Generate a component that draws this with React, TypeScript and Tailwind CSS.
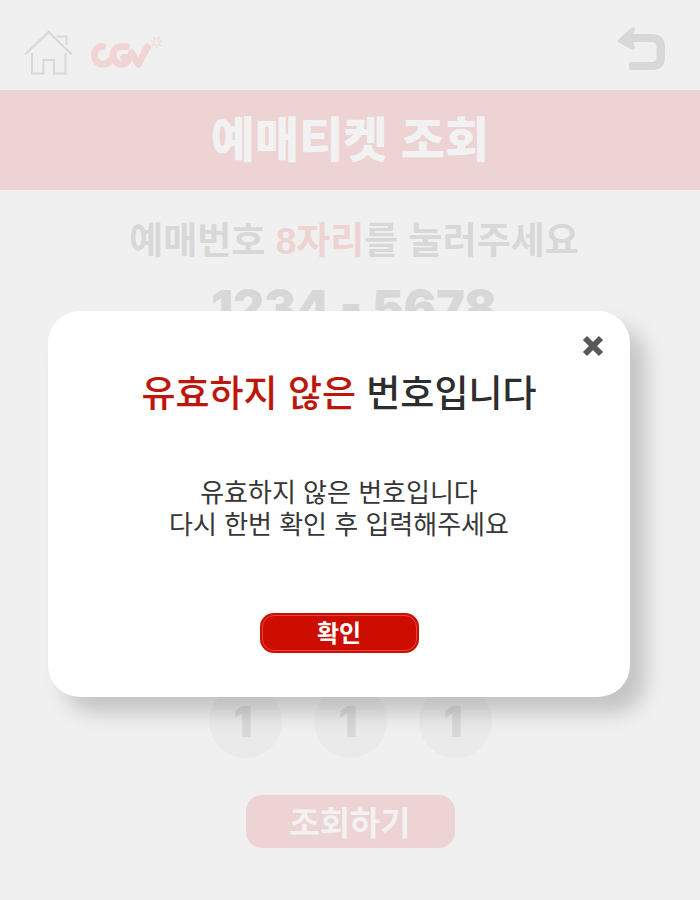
import React from "react";

function HomeIcon() {
  return (
    <svg viewBox="0 0 50 46" className="h-[46px] w-[50px]" fill="none" stroke="#d8d8d8" strokeWidth="2" aria-hidden="true">
      <path d="M1 25.500 24.500 3 48 25.500" />
      <path d="M33 7.500h9.500v8.500" />
      <path d="M8 24v20.500h11.500V31h10.500v13.500h11.500V24" />
    </svg>
  );
}

function CgvLogo() {
  return (
    <svg viewBox="0 0 72 34" className="h-[34px] w-[72px]" fill="none" strokeLinecap="round" strokeLinejoin="round" aria-label="CGV" role="img">
      <g stroke="#f1d5d5" strokeWidth="7">
        <path d="M12.500 11.500c-5.500 0-8 4-8 8.500 0 5.300 3.500 9.300 8.500 9.300 3 0 5.500-1.500 7.500-4" />
        <path d="M36.500 11.500H32c-6 0-9 4-9 8.500 0 5.500 4 9.300 8.700 9.300 3.500 0 6.300-2 6.800-6.800h-5" />
        <path d="M41.500 18 48.600 29.300 57.300 12" />
      </g>
      <g stroke="#f2dcd3" strokeWidth="1.800">
        <path d="M63.800 2.500 65 4.800M68.800 2.500 67.700 4.800M61.500 6.200l2.200.600M71.200 6.200l-2.200.600M62.300 10.500l2-1.500M70.500 10.500l-2-1.500M66.400 10.300v2" />
      </g>
    </svg>
  );
}

function BackIcon() {
  return (
    <svg viewBox="0 0 48 44" className="h-11 w-12" aria-hidden="true">
      <path
        d="M1.500 12.500 14 1q3-2 4 1-1.500 3-1 5h17q14 0 14 13v10q0 13-13 13H14q-2 0-2-2v-4q0-2 2-2h21q4.500 0 4.500-4V20q0-5-5-5H17q-.500 3 1 5-.500 4-4 2L1.500 15.500q-2-1.500 0-3Z"
        fill="#d8d8d8"
      />
    </svg>
  );
}

function KeypadButton({ digit }: { digit: number }) {
  return (
    <button
      type="button"
      className="size-[73px] rounded-full bg-[#eaeaea] pr-1 font-['Inter',sans-serif] text-[42px] leading-none font-black text-[#d8d8d8]"
    >
      {digit}
    </button>
  );
}

function InvalidNumberDialog() {
  return (
    <section
      role="dialog"
      aria-modal="true"
      aria-labelledby="dialog-title"
      className="absolute top-[311px] right-[70px] left-12 flex flex-col items-center rounded-[32px] bg-white px-6 pt-[58px] pb-11 text-center shadow-[16px_16px_20px_rgba(0,0,0,0.18)]"
    >
      <button type="button" aria-label="닫기" className="absolute top-6 right-[26px]">
        <svg viewBox="0 0 22 22" className="size-[22px]" stroke="#585858" strokeWidth="6" aria-hidden="true">
          <path d="M3 3l16 16M19 3 3 19" />
        </svg>
      </button>
      <h2 id="dialog-title" className="text-[37px] leading-[52px] font-medium text-[#2d2d2d]">
        <span className="text-[#bd160c]">유효하지 않은</span> 번호입니다
      </h2>
      <p className="mt-14 text-[26px] leading-8 text-[#363636]">
        유효하지 않은 번호입니다
        <br />
        다시 한번 확인 후 입력해주세요
      </p>
      <button
        type="button"
        className="mt-[72px] h-10 w-[159px] rounded-[14px] bg-[#cd0d00] p-[2px] text-2xl leading-none font-bold text-white"
      >
        <span className="flex h-full items-center justify-center rounded-xl border border-[#e0483f] pt-0.5">확인</span>
      </button>
    </section>
  );
}

export default function App() {
  return (
    <div className="relative min-h-screen bg-[#f0f0f0] font-['Liberation_Sans','Noto_Sans_CJK_KR',sans-serif]">
      <header className="flex h-[90px] items-start pr-[35px] pl-6">
        <a href="#home" aria-label="홈" className="mt-[29px]">
          <HomeIcon />
        </a>
        <div className="mt-[35px] ml-4">
          <CgvLogo />
        </div>
        <button type="button" aria-label="뒤로" className="mt-[27px] ml-auto">
          <BackIcon />
        </button>
      </header>

      <h1 className="flex h-[100px] items-center justify-center bg-[#edd3d3] pt-0.5 text-[48px] leading-none font-black text-[#f2f2f2]">
        예매티켓 조회
      </h1>

      <main className="flex flex-col items-center">
        <p className="mt-[26px] pl-2 text-[37px] leading-[52px] font-bold text-[#d8d8d8]">
          예매번호 <span className="text-[#efd3d2]">8자리</span>를 눌러주세요
        </p>
        <p className="mt-3.5 pl-2 font-['Inter',sans-serif] text-[48px] leading-[52px] font-black text-[#d8d8d8]">1234 - 5678</p>
        <div className="mt-[351px] flex gap-8">
          <KeypadButton digit={1} />
          <KeypadButton digit={1} />
          <KeypadButton digit={1} />
        </div>
        <button
          type="button"
          className="mt-[37px] h-[53px] w-[209px] rounded-2xl bg-[#edd3d3] pt-1 text-[33px] leading-none font-bold text-[#f2f2f2]"
        >
          조회하기
        </button>
      </main>

      <InvalidNumberDialog />
    </div>
  );
}
